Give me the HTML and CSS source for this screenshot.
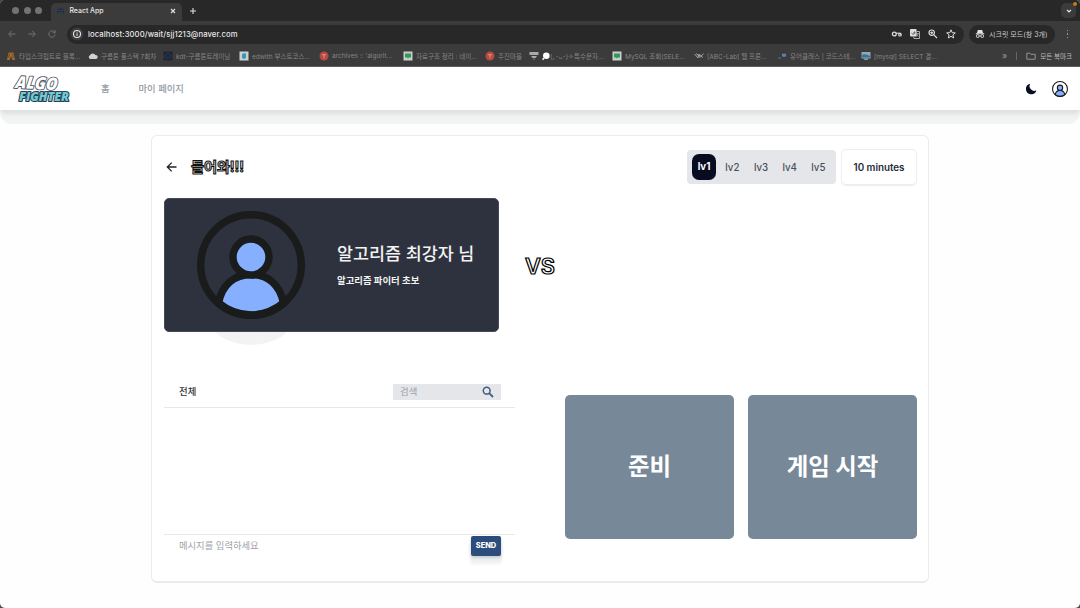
FILE: index.html
```html
<!DOCTYPE html>
<html lang="ko">
<head>
<meta charset="utf-8">
<title>React App</title>
<link rel="stylesheet" href="styles.css">
</head>
<body>
<div class="window">
  <header class="browser">
    <div class="tabstrip">
      <div class="lights"><i></i><i></i><i></i></div>
      <div class="tab">
        <svg class="tab-icon" viewBox="0 0 9 8"><path d="M1 7 L1.5 3 Q2 1 3.5 1.5 H5.5 Q7 1 7.5 3 L8 7 L6 5 H3Z" fill="#1d2d48"/><path d="M2.5 3.5h1.2M5.5 3.5h1" stroke="#50617e" stroke-width=".8"/></svg>
        <span class="tab-title">React App</span>
        <svg class="tab-close" viewBox="0 0 6 6"><path d="M1 1 5 5M5 1 1 5" stroke="#e0e0e0" stroke-width="1.1"/></svg>
      </div>
      <svg class="tab-new" viewBox="0 0 8 8"><path d="M4 1V7M1 4H7" stroke="#ddd" stroke-width="1.1"/></svg>
      <div class="tab-menu"><svg viewBox="0 0 6 4"><path d="M1 .8 3 2.8 5 .8" fill="none" stroke="#eee" stroke-width="1.2"/></svg><b class="dot"></b></div>
    </div>
    <div class="toolbar">
      <div class="history">
        <svg viewBox="0 0 10 10"><path d="M8.5 5H2M4.7 2 1.7 5 4.7 8" /></svg>
        <svg viewBox="0 0 10 10"><path d="M1.5 5H8M5.3 2 8.3 5 5.3 8" /></svg>
        <svg viewBox="0 0 10 10"><path d="M8.2 5.5A3.2 3.2 0 1 1 7.3 2.8M8.2 1.2V3.8H5.6" /></svg>
      </div>
      <div class="address">
        <svg class="info" viewBox="0 0 14 14"><circle cx="7" cy="7" r="6.5" fill="#3d3d3d"/><circle cx="7" cy="7" r="3.5" fill="none" stroke="#e4e4e4" stroke-width="1.1"/><path d="M7 6.3V9M7 4.7V5.6" stroke="#e4e4e4"/></svg>
        <span class="url">localhost:3000/wait/sjj1213@naver.com</span>
        <div class="actions">
          <svg viewBox="0 0 12 12"><circle cx="3.3" cy="6" r="1.9" fill="none" stroke="#ddd" stroke-width="1.3"/><path d="M5 5.2H9.500V6.700" stroke="#ddd" stroke-width="1" fill="none"/><circle cx="9" cy="6.700" r="1.300" fill="none" stroke="#ddd" stroke-width="1.100"/></svg>
          <svg viewBox="0 0 12 12"><rect x="1" y="1" width="6.6" height="7.5" rx="1" fill="#dedede"/><path d="M2.7 4.8a1.6 1.6 0 1 0 2.4-1.5M4.3 4.8h1.6" fill="none" stroke="#444" stroke-width=".8"/><path d="M7.8 3.5H10.5V10.5H5L4.7 9" fill="none" stroke="#bbb" stroke-width=".9"/><path d="M6.8 5.6H9.8M8.3 5V5.6M9.3 5.6Q8.8 7.5 7.3 8.6M7.3 6.5 9.3 8.6" stroke="#bbb" stroke-width=".7" fill="none"/></svg>
          <svg viewBox="0 0 12 12"><circle cx="4.7" cy="4.7" r="2.7" fill="none" stroke="#ddd" stroke-width="1.2"/><path d="M6.8 6.8 10 10M3.4 4.7H6M4.7 3.4V6" stroke="#ddd" stroke-width="1.2"/></svg>
          <svg viewBox="0 0 12 12"><path d="M6 1.8 7.2 4.7 10.3 4.9 7.9 6.9 8.7 10 6 8.3 3.3 10 4.1 6.9 1.7 4.9 4.8 4.7Z" fill="none" stroke="#ddd"/></svg>
        </div>
      </div>
      <div class="incognito">
        <svg viewBox="0 0 10 10"><path d="M2.8 1H7.2L8 4H2Z" fill="#e2e2e2"/><path d="M.8 4.7H9.2" stroke="#e2e2e2"/><path d="M4.2 7H5.8" stroke="#e2e2e2"/><rect x="1.5" y="5.7" width="2.5" height="2.7" rx=".8" fill="none" stroke="#e2e2e2"/><rect x="6" y="5.7" width="2.5" height="2.7" rx=".8" fill="none" stroke="#e2e2e2"/></svg>
        <span>시크릿 모드(창 3개)</span>
      </div>
      <div class="more"><i></i><i></i><i></i></div>
    </div>
    <div class="bookmarks">
      <div class="bm"><svg viewBox="0 0 10 10"><path d="M1 9 2.5 2 4.5 1 5 4 5.5 1 7.5 2 9 9H6.5L5 5 3.5 9Z" fill="#a76d31"/><path d="M3.4 3 2.7 7M6.6 3 7.3 7" stroke="#493628" stroke-width=".7"/></svg><span>타입스크립트로 블록...</span></div>
      <div class="bm"><svg viewBox="0 0 10 10"><path d="M2.4 8A2 2 0 0 1 2 4.2 3 3 0 0 1 7.4 4 2 2 0 0 1 8 8Z" fill="#d0d0d0"/></svg><span>구름톤 풀스택 7회차</span></div>
      <div class="bm"><svg viewBox="0 0 10 10"><rect x=".5" y=".5" width="9" height="9" fill="#202631"/><path d="M3 7A1.5 1.5 0 0 1 3 4 2 2 0 0 1 7 4.3 1.4 1.4 0 0 1 7 7Z" fill="#16294d" stroke="#354665" stroke-width=".5"/></svg><span>kdt-구름톤트레이닝</span></div>
      <div class="bm"><svg viewBox="0 0 10 10"><rect x=".5" y=".5" width="9" height="9" fill="#cbd0d1"/><path d="M3 3 6 2 7 3V7L5 8 3 7Z" fill="#3797bd"/></svg><span>edwith 부스트코스...</span></div>
      <div class="bm"><svg viewBox="0 0 10 10"><circle cx="5" cy="5" r="4.5" fill="#b64a40"/><path d="M3 3.7H7M5 3.7V7.3" stroke="#df9288" stroke-width="1"/></svg><span>archives :: 'algorit...</span></div>
      <div class="bm"><svg viewBox="0 0 10 10"><rect x=".5" y=".5" width="9" height="9" fill="#c9d0ca"/><path d="M2 2.5H8V6.5H6L5 7.5 4 6.5H2Z" fill="#36975b"/></svg><span>자료구조 정리 : 네이...</span></div>
      <div class="bm"><svg viewBox="0 0 10 10"><circle cx="5" cy="5" r="4.5" fill="#b64a40"/><path d="M3 3.7H7M5 3.7V7.3" stroke="#df9288" stroke-width="1"/></svg><span>주진마을</span></div>
      <div class="bm"><svg viewBox="0 0 10 10"><path d="M.5 1H9.5V4H.5ZM2 5H8L6.5 7H3.5ZM4 7.7H6L5 9Z" fill="#aaa"/></svg><svg class="bubble" viewBox="0 0 8 8"><circle cx="4.300" cy="3.700" r="3.300" fill="#fff"/><circle cx="1.200" cy="7" r=".9" fill="#fff"/></svg><span>(｡･ᴗ･)✧특수문자...</span></div>
      <div class="bm"><svg viewBox="0 0 10 10"><rect x=".5" y=".5" width="9" height="9" fill="#c9d0ca"/><path d="M2 2.5H8V6.5H6L5 7.5 4 6.5H2Z" fill="#36975b"/></svg><span>MySQL 조회(SELE...</span></div>
      <div class="bm"><svg viewBox="0 0 10 10"><path d="M.5 3 4 7 5 3 6 6.5 9.5 2.5M2 2.5 5 5M5.5 3.5 9 6.5" fill="none" stroke="#aaa" stroke-width=".9"/></svg><span>[ABC-Lab] 웹 프론...</span></div>
      <div class="bm"><svg viewBox="0 0 10 10"><path d="M5 2.7H9V5.7H5Z" fill="#607eae"/><path d="M1 7H4" stroke="#59709a"/></svg><span>유어클래스 | 코드스테...</span></div>
      <div class="bm"><svg viewBox="0 0 10 10"><rect x=".5" y="1" width="9" height="6.5" rx=".5" fill="#94a8b4"/><path d="M1 4Q4 2 9 5V6.5H1Z" fill="#35739e"/><path d="M3 9H7L6.5 7.5H3.5Z" fill="#999"/></svg><span>[mysql] SELECT 결...</span></div>
      <div class="bm-end"><span class="chev">»</span><i></i><svg viewBox="0 0 10 8"><path d="M.8 1.2H3.8L4.8 2.3H9.2V7.2H.8Z" fill="none" stroke="#aaa" stroke-width=".8"/></svg><span>모든 북마크</span></div>
    </div>
  </header>

  <nav class="nav">
    <svg class="logo" viewBox="0 0 60 30" role="img" aria-label="Algo Fighter">
      <g transform="rotate(3 30 15) skewX(-4)">
        <text class="logo-algo" x="2" y="14.500" textLength="42" lengthAdjust="spacingAndGlyphs">ALGO</text>
      </g>
      <text class="logo-fighter" x="5" y="25.500" textLength="50" lengthAdjust="spacingAndGlyphs">FIGHTER</text>
    </svg>
    <a class="link home">홈</a>
    <a class="link">마이 페이지</a>
    <div class="nav-right">
      <svg class="moon" viewBox="0 0 12 12"><path d="M5.2.8A5.3 5.3 0 1 0 11.4 7.3 4.7 4.7 0 0 1 5.2.8Z" fill="#070d22"/></svg>
      <svg class="user" viewBox="0 0 108 108"><use href="#person"/></svg>
    </div>
  </nav>

  <main class="room">
    <div class="room-head">
      <svg class="back" viewBox="0 0 12 12"><path d="M10.500 6H1.500M5.700 1.600 1.300 6 5.700 10.400" fill="none" stroke="#222" stroke-width="1.300"/></svg>
      <h1 class="title">들어와!!!</h1>
      <div class="levels"><span class="level active">lv1</span><span class="level">lv2</span><span class="level">lv3</span><span class="level">lv4</span><span class="level">lv5</span></div>
      <div class="time">10 minutes</div>
    </div>

    <div class="match">
      <section class="player">
        <svg class="avatar" viewBox="0 0 108 108">
          <defs>
            <g id="person">
              <path d="M21.500 92C25 74 37 63.500 54 63.500S83 74 86.500 92Q72 104 54 104T21.500 92Z" fill="#86afff" stroke="#191c1b" stroke-width="7.500"/>
              <circle cx="54" cy="54" r="50.300" fill="none" stroke="#191c1b" stroke-width="7.400"/>
              <circle cx="54" cy="46" r="18" fill="#86afff" stroke="#191c1b" stroke-width="7.400"/>
            </g>
          </defs>
          <use href="#person"/>
        </svg>
        <div class="player-text"><strong>알고리즘 최강자 님</strong><span>알고리즘 파이터 초보</span></div>
      </section>
      <div class="versus"><svg viewBox="0 0 36 26"><text x="3" y="20.500" textLength="30" lengthAdjust="spacingAndGlyphs">VS</text></svg></div>
    </div>

    <div class="lower">
      <section class="chat">
        <div class="chat-head">
          <span>전체</span>
          <div class="search"><span>검색</span><svg viewBox="0 0 12 12"><circle cx="4.700" cy="4.700" r="3.400" fill="none" stroke="#3f5d83" stroke-width="1.500"/><path d="M7.200 7.200 11 11" stroke="#3f5d83" stroke-width="1.800"/></svg></div>
        </div>
        <div class="chat-body"></div>
        <div class="chat-input"><span>메시지를 입력하세요</span><button class="send">SEND</button></div>
      </section>
      <div class="controls"><button class="big">준비</button><button class="big">게임 시작</button></div>
    </div>
  </main>
</div>
</body>
</html>
```

FILE: styles.css
```css
* { box-sizing: border-box; }
body {
  margin: 0;
  background: #4b4b4b;
  font-family: Inter, "Noto Sans CJK KR", sans-serif;
}
svg { display: block; flex: none; }
button { border: 0; padding: 0; font-family: inherit; }
.window {
  position: relative;
  z-index: 0;
  width: 1080px;
  height: 608px;
  overflow: hidden;
  background: #fefefe;
  border-radius: 5px;
}

/* Browser frame */
.browser { height: 67px; background: #3b3b3b; border-bottom: 1px solid #5c5c5c; }
.tabstrip { height: 21px; background: #282828; display: flex; align-items: center; padding-left: 12px; }
.lights { display: flex; gap: 4.5px; width: 39px; }
.lights i { width: 7px; height: 7px; border-radius: 50%; background: #737373; }
.tab {
  width: 131px;
  height: 18px;
  margin-top: 3px;
  padding: 0 6px 3px 5px;
  display: flex;
  align-items: center;
  background: #3b3b3b;
  border-radius: 5px 5px 0 0;
}
.tab-icon { width: 9px; height: 8px; margin-right: 4.5px; }
.tab-title { font-size: 6.9px; font-weight: 500; color: #e8e8e8; flex: 1; }
.tab-close { width: 6px; height: 6px; }
.tab-new { width: 8px; height: 8px; margin-left: 7px; }
.tab-menu {
  position: relative;
  width: 15px;
  height: 15px;
  margin: 0 4px 0 auto;
  display: grid;
  place-items: center;
  background: #3b3b3b;
  border-radius: 5px;
}
.tab-menu svg { width: 6px; height: 4px; }
.dot { position: absolute; right: -1px; top: -1px; width: 4px; height: 4px; border-radius: 50%; background: #c47923; }

.toolbar { height: 26px; display: flex; align-items: center; padding-left: 7px; }
.history { display: flex; gap: 10px; width: 60px; }
.history svg { width: 10px; height: 10px; fill: none; stroke: #737373; stroke-width: 1; }
.address { width: 897px; height: 19px; border-radius: 10px; background: #282828; display: flex; align-items: center; padding: 0 7px 0 3px; }
.info { width: 14px; height: 14px; margin-right: 4px; }
.url { font-size: 7.7px; letter-spacing: 0.09px; font-weight: 500; color: #e7e7e7; }
.actions { display: flex; gap: 6px; margin-left: auto; }
.actions svg { width: 12px; height: 12px; }
.incognito {
  width: 86px;
  height: 19px;
  margin-left: 5px;
  padding-left: 6px;
  display: flex;
  align-items: center;
  gap: 4px;
  border-radius: 10px;
  background: #282828;
  color: #ccc;
  font-size: 7px;
  white-space: nowrap;
}
.incognito svg { width: 10px; height: 10px; }
.more { margin-left: 12px; display: grid; gap: 2px; }
.more i { width: 1.3px; height: 1.3px; background: #999; }
.bookmarks {
  height: 17px;
  padding: 0 8px 0 6px;
  display: grid;
  grid-template-columns: 82px 75px 76px 80px 84px 82px 44px 83px 82px 83px 84px 90px 1fr;
  align-items: center;
  font-size: 6.5px;
  color: #858585;
  white-space: nowrap;
}
.bm { display: flex; align-items: center; gap: 3px; }
.bm svg { width: 10px; height: 10px; }
.bm .bubble { width: 8px; height: 8px; margin-right: -3px; }
.bm-end { display: flex; align-items: center; justify-content: flex-end; color: #bbb; }
.bm-end i { width: 1px; height: 8px; background: #666; margin: 0 9px; }
.bm-end svg { width: 10px; height: 8px; margin-right: 4px; }
.chev { font-size: 9px; color: #999; }

/* Site navigation */
.nav {
  position: relative;
  height: 43px;
  padding: 0 12px 0 14px;
  display: flex;
  align-items: center;
  background: #fff;
  box-shadow: 0 4px 3px -1px #dfe2e1, 0 8px 3px -3px #e7eae9;
}
.nav::after {
  content: "";
  position: absolute;
  z-index: -1;
  inset: 33px 0 -14px;
  border-radius: 14px;
  background: #f2f3f3;
}
.logo { width: 60px; height: 30px; margin-top: 3px; overflow: visible; }
.logo text { font-family: "Open Sans", sans-serif; font-weight: 800; font-style: italic; stroke-linejoin: round; paint-order: stroke; }
.logo-algo { font-size: 17px; fill: #fff; stroke: #4b5260; stroke-width: 1.8px; }
.logo-fighter { font-size: 13px; fill: #72c9cf; stroke: #263f55; stroke-width: 2.2px; }
.link { margin-top: -2px; font-size: 9.3px; font-weight: 500; color: #9298a2; }
.home { margin-right: 29px; margin-left: 27px; }
.nav-right { display: flex; align-items: center; gap: 15px; margin-left: auto; }
.moon { width: 12px; height: 12px; }
.user { width: 16px; height: 16px; }

/* Waiting room */
.room {
  width: 778px;
  height: 448px;
  margin: 25px auto 0;
  padding: 13px 11px 0 12px;
  background: #fff;
  border: 1px solid #ebebeb;
  border-bottom-width: 2px;
  border-radius: 6px;
}
.room-head { height: 36px; display: flex; align-items: center; }
.back { width: 12px; height: 12px; margin-left: 2px; }
.title { margin: -1px 0 0 13px; font-size: 14.2px; line-height: 18px; font-weight: 700; letter-spacing: -0.1px; color: #fff; -webkit-text-stroke: 1.1px #111; }
.levels { width: 149px; height: 34px; margin-left: auto; padding: 0 3px 0 5px; display: flex; align-items: center; border-radius: 4px; background: #e4e6ea; }
.level { width: 28.7px; text-align: center; font-size: 9.7px; font-weight: 500; color: #4a4f59; }
.level.active { width: 24px; height: 26px; flex: none; margin-right: 2px; line-height: 26px; border-radius: 7px; background: #070c20; color: #fff; font-weight: 700; }
.time { width: 76px; height: 36px; margin-left: 5px; display: grid; place-items: center; border: 1px solid #eceef0; border-radius: 5px; box-shadow: 0 1px 1px #eee; font-size: 9.8px; font-weight: 600; color: #252b38; }

.match { display: flex; margin-top: 13px; height: 134px; }
.player { position: relative; width: 335px; height: 134px; padding-left: 32px; display: flex; align-items: center; gap: 32px; border-radius: 5px; background: #2d323e; border: 1px solid #444956; }
.player::after { content: ""; position: absolute; left: 50px; top: 133px; width: 72px; height: 13px; background: #f3f3f3; clip-path: polygon(0 0, 100% 0, 93% 35%, 80% 70%, 65% 93%, 50% 100%, 35% 93%, 20% 70%, 7% 35%); }
.avatar { width: 108px; height: 108px; }
.player-text { display: grid; margin-top: -2px; color: #f3f3f3; white-space: nowrap; }
.player-text strong { font-size: 17.4px; line-height: 26px; font-weight: 500; }
.player-text span { margin-top: 7px; font-size: 9.4px; line-height: 14px; font-weight: 600; }
.versus { margin: 55px 0 0 23px; }
.versus svg { width: 36px; height: 26px; }
.versus text { font-family: Inter, sans-serif; font-size: 21px; font-weight: 600; fill: #fff; stroke: #000; stroke-width: 1.2px; }

.lower { display: flex; justify-content: space-between; margin-top: 44px; }
.chat { width: 351px; }
.chat-head { height: 32px; padding: 0 14px 0 15px; display: flex; align-items: center; justify-content: space-between; border-bottom: 1px solid #e8e8e8; font-size: 9.4px; font-weight: 500; color: #333; }
.chat-head > span { margin-top: -2px; }
.search { width: 108px; height: 16px; padding: 0 7px; display: flex; align-items: center; justify-content: space-between; background: #e4e6ea; border-radius: 1px; color: #9ba1aa; font-weight: 400; }
.search span { margin-top: -2px; }
.search svg { width: 12px; height: 12px; }
.chat-body { height: 126px; }
.chat-input { height: 24px; padding: 0 14px 0 15px; display: flex; align-items: center; justify-content: space-between; border-top: 1px solid #e8e8e8; font-size: 9.3px; color: #9ba1aa; }
.chat-input span { margin-top: -3px; }
.send { width: 30px; height: 20px; margin-top: -1px; padding-bottom: 1px; border-radius: 2px; background: #2c4c7c; color: #fff; font-size: 7.4px; font-weight: 800; box-shadow: 0 2px 3px #c7ccd3, 0 7px 3px 1px #f0f1f1; }
.controls { display: flex; gap: 14px; margin-top: 19px; }
.big { width: 169px; height: 144px; padding-bottom: 4px; border-radius: 5px; background: #778898; color: #fff; font-size: 23.4px; font-weight: 700; }
```
